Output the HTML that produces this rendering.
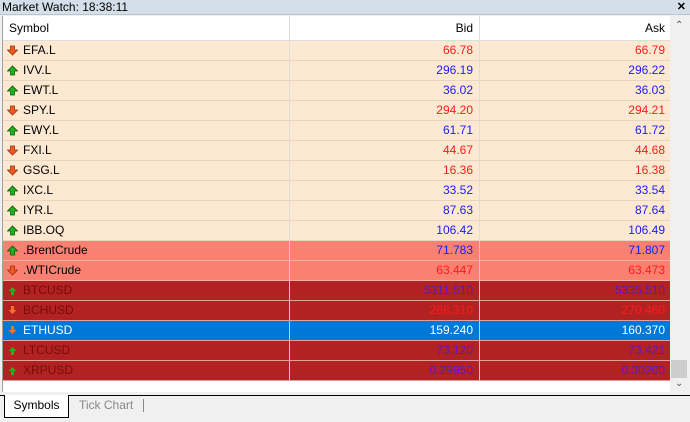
<!DOCTYPE html>
<html><head><style>
body{margin:0;width:690px;height:422px;background:#f0f0f0;font-family:"Liberation Sans",Tahoma,sans-serif;font-size:12px;overflow:hidden;position:relative}
.title{position:absolute;left:0;top:0;width:690px;height:15px;background:#d5dfea;color:#000;font-size:12px;line-height:15px;padding-left:2px;box-sizing:border-box;border-bottom:1px solid #b8c4d0}
.x{position:absolute;right:4px;top:0;font-weight:bold;font-size:11px}
.tbl{position:absolute;left:2px;top:16px;width:667px;height:376px;background:#fff;border-left:1px solid #a0a0a0}
.hdr{height:24px;line-height:24px;border-bottom:1px solid #ddd;position:relative}
.row{height:19px;line-height:19px;border-bottom:1px solid #e8d5c0;position:relative}
.c1{position:absolute;left:0;width:286px;padding-left:20px;box-sizing:border-box}
.c2{position:absolute;left:286px;width:189px;text-align:right;padding-right:5px;box-sizing:border-box;border-left:1px solid #ccc;height:100%}
.c3{position:absolute;left:476px;width:190px;text-align:right;padding-right:4px;box-sizing:border-box;border-left:1px solid #ccc;height:100%}
.hdr .c1{padding-left:6px}
.ic{position:absolute;left:4px;top:4px}
.b{background:#fde9d2}.s{background:#fa8072;border-bottom-color:#fbb0a4}.d{background:#b22222;border-bottom-color:#e0a0a0}.e{background:#0078d7;border-bottom-color:#e0a0a0;color:#fff}
.b .c2,.b .c3{border-left-color:#ddd}
.r{color:#ff1a1a}.bl{color:#1a1aff}.p{color:#5a18c8}.dr{color:#7a0a0a}
.sb{position:absolute;left:670px;top:16px;width:18px;height:376px;background:#f0f0f0}
.tabs{position:absolute;left:0;top:392px;width:690px;height:30px}
.tab1{position:absolute;left:4px;top:3px;width:63px;height:22px;background:#fff;border:1px solid #000;border-top:none;text-align:center;line-height:20px}
.tab2{position:absolute;left:79px;top:6px;color:#888}
.sep{position:absolute;left:143px;top:7px;width:1px;height:13px;background:#888}
</style></head><body>
<div class="title">Market Watch: 18:38:11<span class="x">✕</span></div>
<div class="tbl">
<div class="hdr"><div class="c1">Symbol</div><div class="c2" style="border-left-color:#ddd">Bid</div><div class="c3" style="border-left-color:#ddd">Ask</div></div>
<!--rows-->
<div class="row b"><svg class="ic" width="11" height="11"><path d="M3.5 1h4v4h3l-5 5-5-5h3z" fill="#f05a1e" stroke="#a03010" stroke-width="0.8"/></svg><div class="c1">EFA.L</div><div class="c2 r">66.78</div><div class="c3 r">66.79</div></div>
<div class="row b"><svg class="ic" width="11" height="11"><path d="M3.5 10h4V6h3l-5-5-5 5h3z" fill="#22b022" stroke="#0a5a0a" stroke-width="0.8"/></svg><div class="c1">IVV.L</div><div class="c2 bl">296.19</div><div class="c3 bl">296.22</div></div>
<div class="row b"><svg class="ic" width="11" height="11"><path d="M3.5 10h4V6h3l-5-5-5 5h3z" fill="#22b022" stroke="#0a5a0a" stroke-width="0.8"/></svg><div class="c1">EWT.L</div><div class="c2 bl">36.02</div><div class="c3 bl">36.03</div></div>
<div class="row b"><svg class="ic" width="11" height="11"><path d="M3.5 1h4v4h3l-5 5-5-5h3z" fill="#f05a1e" stroke="#a03010" stroke-width="0.8"/></svg><div class="c1">SPY.L</div><div class="c2 r">294.20</div><div class="c3 r">294.21</div></div>
<div class="row b"><svg class="ic" width="11" height="11"><path d="M3.5 10h4V6h3l-5-5-5 5h3z" fill="#22b022" stroke="#0a5a0a" stroke-width="0.8"/></svg><div class="c1">EWY.L</div><div class="c2 bl">61.71</div><div class="c3 bl">61.72</div></div>
<div class="row b"><svg class="ic" width="11" height="11"><path d="M3.5 1h4v4h3l-5 5-5-5h3z" fill="#f05a1e" stroke="#a03010" stroke-width="0.8"/></svg><div class="c1">FXI.L</div><div class="c2 r">44.67</div><div class="c3 r">44.68</div></div>
<div class="row b"><svg class="ic" width="11" height="11"><path d="M3.5 1h4v4h3l-5 5-5-5h3z" fill="#f05a1e" stroke="#a03010" stroke-width="0.8"/></svg><div class="c1">GSG.L</div><div class="c2 r">16.36</div><div class="c3 r">16.38</div></div>
<div class="row b"><svg class="ic" width="11" height="11"><path d="M3.5 10h4V6h3l-5-5-5 5h3z" fill="#22b022" stroke="#0a5a0a" stroke-width="0.8"/></svg><div class="c1">IXC.L</div><div class="c2 bl">33.52</div><div class="c3 bl">33.54</div></div>
<div class="row b"><svg class="ic" width="11" height="11"><path d="M3.5 10h4V6h3l-5-5-5 5h3z" fill="#22b022" stroke="#0a5a0a" stroke-width="0.8"/></svg><div class="c1">IYR.L</div><div class="c2 bl">87.63</div><div class="c3 bl">87.64</div></div>
<div class="row b"><svg class="ic" width="11" height="11"><path d="M3.5 10h4V6h3l-5-5-5 5h3z" fill="#22b022" stroke="#0a5a0a" stroke-width="0.8"/></svg><div class="c1">IBB.OQ</div><div class="c2 bl">106.42</div><div class="c3 bl">106.49</div></div>
<div class="row s"><svg class="ic" width="11" height="11"><path d="M3.5 10h4V6h3l-5-5-5 5h3z" fill="#22b022" stroke="#0a5a0a" stroke-width="0.8"/></svg><div class="c1">.BrentCrude</div><div class="c2 bl">71.783</div><div class="c3 bl">71.807</div></div>
<div class="row s"><svg class="ic" width="11" height="11"><path d="M3.5 1h4v4h3l-5 5-5-5h3z" fill="#f05a1e" stroke="#a03010" stroke-width="0.8"/></svg><div class="c1">.WTICrude</div><div class="c2 r">63.447</div><div class="c3 r">63.473</div></div>
<div class="row d"><svg class="ic" width="11" height="11"><path d="M4 10h3V6h2.5L5.5 2 1.5 6H4z" fill="#22b022"/></svg><div class="c1 dr">BTCUSD</div><div class="c2 p">5311.510</div><div class="c3 p">5335.510</div></div>
<div class="row d"><svg class="ic" width="11" height="11"><path d="M4 1h3v4h2.5l-4 4-4-4H4z" fill="#f07030"/></svg><div class="c1 dr">BCHUSD</div><div class="c2 r">268.310</div><div class="c3 r">270.460</div></div>
<div class="row e"><svg class="ic" width="11" height="11"><path d="M4 1h3v4h2.5l-4 4-4-4H4z" fill="#f07030"/></svg><div class="c1">ETHUSD</div><div class="c2">159.240</div><div class="c3">160.370</div></div>
<div class="row d"><svg class="ic" width="11" height="11"><path d="M4 10h3V6h2.5L5.5 2 1.5 6H4z" fill="#22b022"/></svg><div class="c1 dr">LTCUSD</div><div class="c2 p">73.120</div><div class="c3 p">73.421</div></div>
<div class="row d"><svg class="ic" width="11" height="11"><path d="M4 10h3V6h2.5L5.5 2 1.5 6H4z" fill="#22b022"/></svg><div class="c1 dr">XRPUSD</div><div class="c2 p">0.29950</div><div class="c3 p">0.30200</div></div>
</div>
<div class="sb"><div style="position:absolute;top:4px;left:5px;font-size:10px;color:#555">&#8963;</div><div style="position:absolute;left:1px;top:344px;width:16px;height:18px;background:#cdcdcd"></div><div style="position:absolute;top:362px;left:5px;font-size:10px;color:#555">&#8964;</div></div>
<div class="tabs"><div style="position:absolute;left:0;top:3px;width:690px;height:1px;background:#000"></div><div class="tab1">Symbols</div><div class="tab2">Tick Chart</div><div class="sep"></div></div>
</body></html>
